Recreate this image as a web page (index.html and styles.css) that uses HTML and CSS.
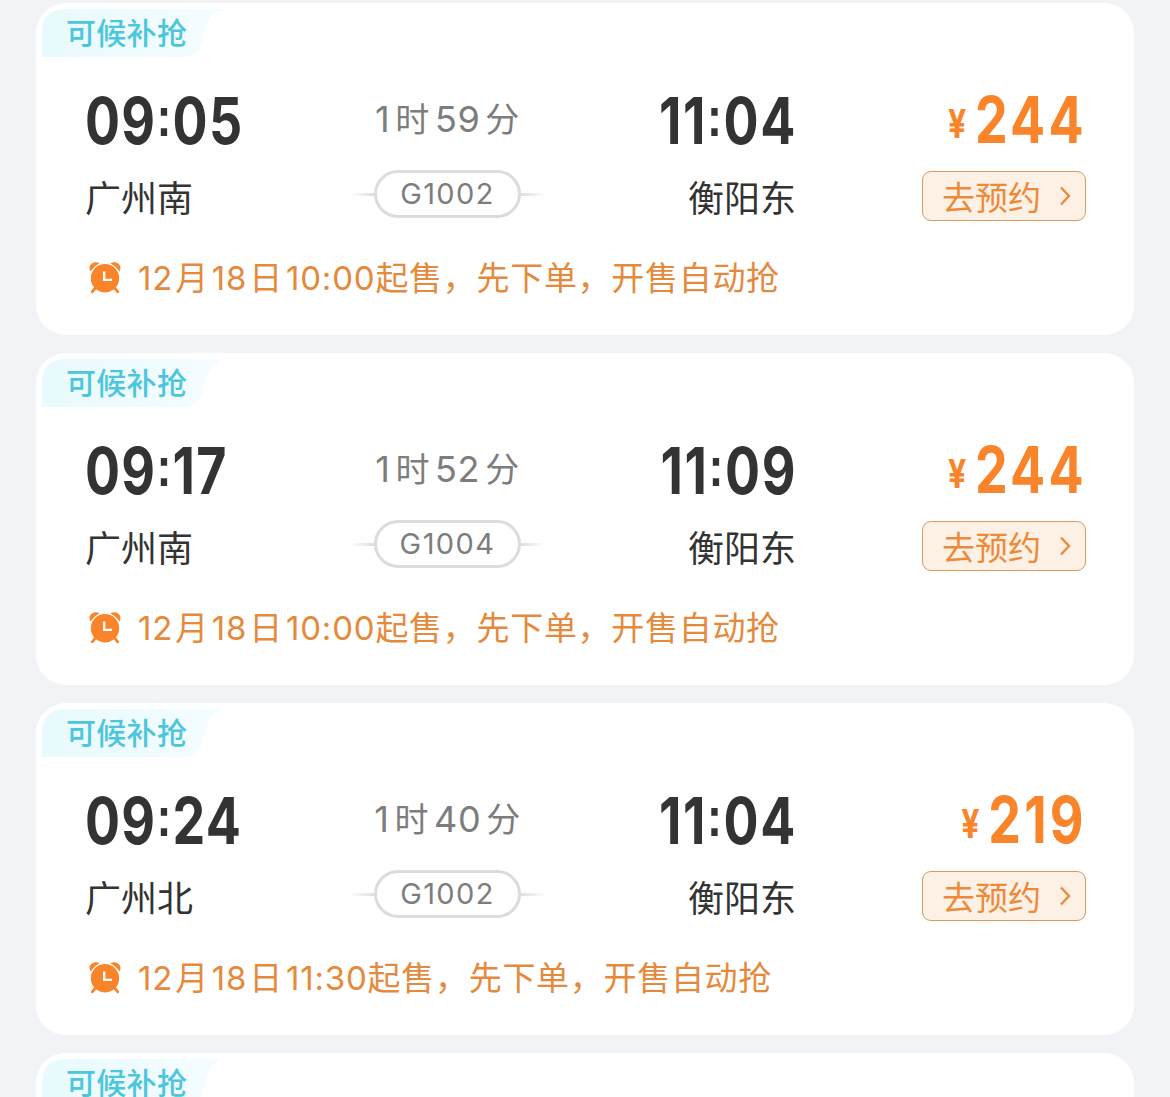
FILE: index.html
```
<!DOCTYPE html>
<html lang="zh-CN">
<head>
    <meta charset="UTF-8">
    <meta name="viewport" content="width=device-width, initial-scale=1.0">
    <title>车次列表</title>
    <link rel="stylesheet" href="styles.css">
</head>
<body>
    <!-- Shared icons -->
    <svg class="sprite" width="0" height="0">
        <defs>
            <linearGradient id="tag-fill" x1="0" y1="0" x2="1" y2="0">
                <stop offset="0" stop-color="#e8fafd"/>
                <stop offset="1" stop-color="#f5fdff"/>
            </linearGradient>
        </defs>
        <symbol id="tag-shape" viewBox="0 0 184 48">
            <path d="M0 48V24Q0 0 24 0H184C172 2 166 10 164 20L161 31Q157 48 141 48Z" fill="url(#tag-fill)"/>
        </symbol>
        <symbol id="alarm" viewBox="0 0 32 32">
            <path d="M1.500 9.500C-2 3.500 4.500-2 10.500 1.300ZM30.500 9.500C34 3.500 27.500-2 21.500 1.300Z" fill="#fa8429"/>
            <circle cx="16" cy="16.200" r="14.800" fill="#fa8429" stroke="#fff" stroke-width="1.200"/>
            <path d="M6.500 26L3.200 29.800M25.500 26L28.800 29.800" stroke="#fa8429" stroke-width="2.800" stroke-linecap="round"/>
            <path d="M15.200 9.500V17.800H23" fill="none" stroke="#fff" stroke-width="2.300"/>
        </symbol>
        <symbol id="arrow" viewBox="0 0 12 20">
            <path d="M2 1.500L10 10L2 18.500" fill="none" stroke="#ed8a3a" stroke-width="2.400"/>
        </symbol>
    </svg>

    <div class="list">
        <div class="card">
            <div class="tag"><svg class="tag-bg"><use href="#tag-shape"/></svg><span>可候补抢</span></div>
            <div class="trip">
                <div class="time">09<i>:</i>05</div>
                <div class="duration">1<i>时</i>59<i>分</i></div>
                <div class="time end">11<i>:</i>04</div>
                <div class="price"><span class="yen">¥</span><span class="amount">244</span></div>
                <div class="station">广州南</div>
                <div class="train"><span>G1002</span></div>
                <div class="station end">衡阳东</div>
                <div class="book"><span>去预约</span><svg><use href="#arrow"/></svg></div>
            </div>
            <div class="notice"><svg><use href="#alarm"/></svg><span>12<i>月</i>18<i>日</i>10:00<i>起售，先下单，开售自动抢</i></span></div>
        </div>

        <div class="card">
            <div class="tag"><svg class="tag-bg"><use href="#tag-shape"/></svg><span>可候补抢</span></div>
            <div class="trip">
                <div class="time">09<i>:</i>17</div>
                <div class="duration">1<i>时</i>52<i>分</i></div>
                <div class="time end">11<i>:</i>09</div>
                <div class="price"><span class="yen">¥</span><span class="amount">244</span></div>
                <div class="station">广州南</div>
                <div class="train"><span>G1004</span></div>
                <div class="station end">衡阳东</div>
                <div class="book"><span>去预约</span><svg><use href="#arrow"/></svg></div>
            </div>
            <div class="notice"><svg><use href="#alarm"/></svg><span>12<i>月</i>18<i>日</i>10:00<i>起售，先下单，开售自动抢</i></span></div>
        </div>

        <div class="card">
            <div class="tag"><svg class="tag-bg"><use href="#tag-shape"/></svg><span>可候补抢</span></div>
            <div class="trip">
                <div class="time">09<i>:</i>24</div>
                <div class="duration">1<i>时</i>40<i>分</i></div>
                <div class="time end">11<i>:</i>04</div>
                <div class="price"><span class="yen">¥</span><span class="amount">219</span></div>
                <div class="station">广州北</div>
                <div class="train"><span>G1002</span></div>
                <div class="station end">衡阳东</div>
                <div class="book"><span>去预约</span><svg><use href="#arrow"/></svg></div>
            </div>
            <div class="notice"><svg><use href="#alarm"/></svg><span>12<i>月</i>18<i>日</i>11:30<i>起售，先下单，开售自动抢</i></span></div>
        </div>

        <div class="card">
            <div class="tag"><svg class="tag-bg"><use href="#tag-shape"/></svg><span>可候补抢</span></div>
        </div>
    </div>
</body>
</html>
```
FILE: styles.css
```
* {
    box-sizing: border-box;
}
body {
    margin: 0;
    height: 1097px;
    overflow: hidden;
    background: #f1f3f7;
    color: #333;
    font-family: Inter, "Noto Sans CJK SC", sans-serif;
}
i {
    font-style: normal;
}
.sprite {
    position: absolute;
}
.list {
    display: flex;
    flex-direction: column;
    gap: 18px;
    padding: 3px 36px 0;
}
.card {
    flex: none;
    height: 332px;
    padding: 6px 48px 0 49px;
    border-radius: 30px;
    background: #fff;
}
/* Corner tag */
.tag {
    position: relative;
    width: 184px;
    height: 48px;
    margin-left: -43px;
    padding-left: 24px;
    color: #4cc6dc;
    font-family: "Noto Sans CJK SC", sans-serif;
    font-size: 30px;
    font-weight: 500;
    line-height: 45px;
    letter-spacing: 0.3px;
}
.tag-bg {
    position: absolute;
    left: 0;
    top: 0;
    width: 184px;
    height: 48px;
}
.tag span {
    position: relative;
}
/* Times, stations, price */
.trip {
    display: grid;
    grid-template-columns: 265px 195px 251px 290px;
    grid-template-rows: 80px 50px;
    padding-top: 24px;
}
.time {
    height: 80px;
    font-size: 65px;
    font-weight: 700;
    letter-spacing: 1.6px;
    line-height: 80px;
    transform: scaleX(0.8);
    transform-origin: left;
}
.time i {
    font-family: "Liberation Sans", sans-serif;
    font-size: 56px;
    line-height: 1;
    vertical-align: 8px;
}
.end {
    text-align: right;
    transform-origin: right;
}
.time.end {
    margin-right: -1px;
    letter-spacing: 2px;
}
.duration {
    color: #7d7d7d;
    font-size: 36px;
    letter-spacing: 0.6px;
    line-height: 76px;
    text-align: center;
    white-space: nowrap;
}
.duration i {
    margin: 0 5px;
    font-size: 34px;
}
.duration i:last-child {
    margin-right: 0;
}
.price {
    display: flex;
    justify-content: flex-end;
    color: #fa8429;
    font-weight: 700;
    line-height: 78px;
    transform: scaleX(0.8);
    transform-origin: right;
}
.yen {
    margin-right: 11px;
    padding-top: 4px;
    font-size: 40px;
}
.amount {
    margin-right: -1px;
    font-size: 65px;
    letter-spacing: 4px;
}
.station {
    font-family: "Noto Sans CJK SC", sans-serif;
    font-size: 36px;
    line-height: 70px;
    height: 50px;
}
.train {
    display: flex;
    align-items: center;
    height: 48px;
    margin-top: 9px;
}
.train::before,
.train::after {
    content: "";
    flex: 1;
    height: 3px;
    background: linear-gradient(90deg, #fff, #ddd);
}
.train::after {
    background: linear-gradient(90deg, #ddd, #fff);
}
.train span {
    width: 147px;
    height: 48px;
    border: 3px solid #dcdcdc;
    border-radius: 24px;
    color: #7d7d7d;
    font-size: 29px;
    letter-spacing: 1.4px;
    line-height: 42px;
    text-align: center;
}
.book {
    display: flex;
    align-items: center;
    justify-content: space-between;
    justify-self: end;
    width: 164px;
    height: 50px;
    margin-top: 10px;
    padding: 0 14px 0 19px;
    border: 1px solid #d99a5c;
    border-radius: 9px;
    background: #fdf1e6;
    color: #ed8a3a;
    font-family: "Noto Sans CJK SC", sans-serif;
    font-size: 33px;
    white-space: nowrap;
}
.book svg {
    width: 12px;
    height: 20px;
}
/* Sale notice */
.notice {
    display: flex;
    align-items: center;
    gap: 17px;
    height: 50px;
    margin-top: 42px;
    padding-left: 4px;
    color: #e58a3c;
    font-size: 33px;
    letter-spacing: 0.8px;
    line-height: 50px;
    white-space: nowrap;
}
.notice svg {
    width: 32px;
    height: 32px;
}
.notice i {
    margin: 0 3px 0 2px;
    letter-spacing: 0.7px;
}
.notice i:last-child {
    margin: 0;
}
```
